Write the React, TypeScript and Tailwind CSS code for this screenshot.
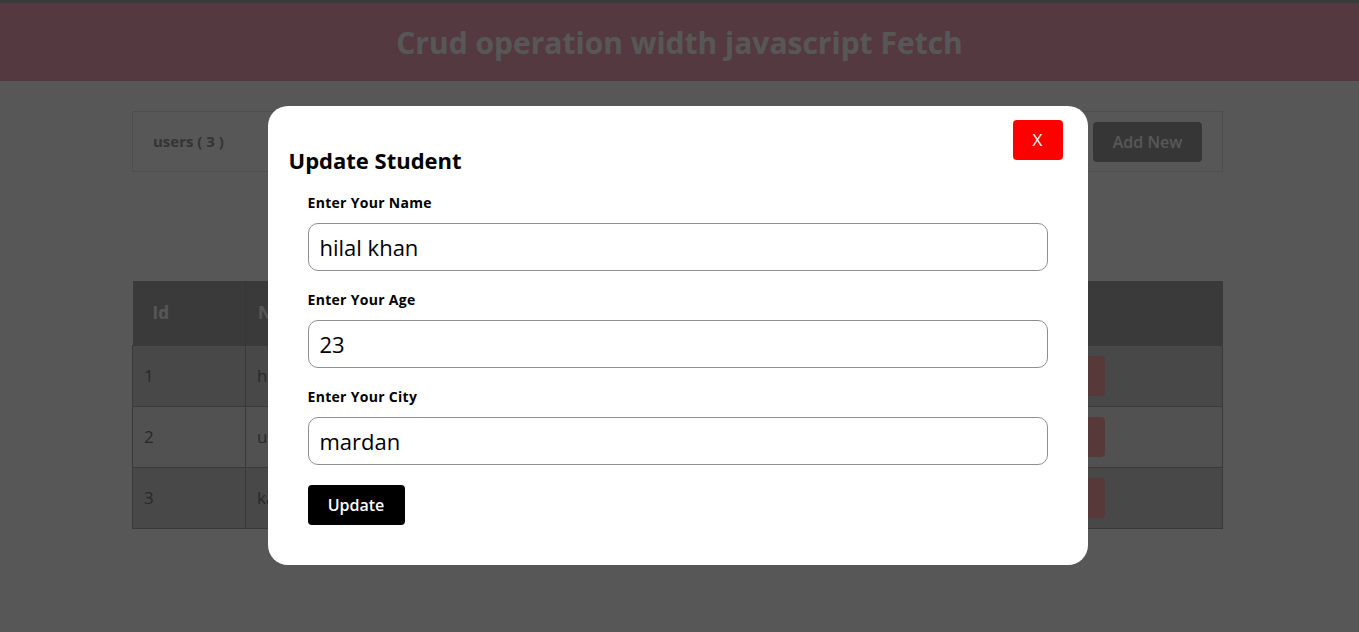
import { useState } from "react";

type Student = {
  id: number;
  name: string;
  age: number;
  city: string;
};

const students: Student[] = [
  { id: 1, name: "hilal khan", age: 23, city: "mardan" },
  { id: 2, name: "usman", age: 25, city: "peshawar" },
  { id: 3, name: "kamran", age: 22, city: "swabi" },
];

const font = "font-['Open_Sans','Liberation_Sans',sans-serif]";

const Field = ({
  label,
  value,
  onChange,
}: {
  label: string;
  value: string;
  onChange: (v: string) => void;
}) => (
  <div className="mt-[20px] first:mt-0">
    <label className="mb-[12px] block text-[14px] font-bold leading-[17px] tracking-[0.3px] text-black">
      {label}
    </label>
    <input
      className="block h-[48px] w-full rounded-[10px] border border-[#8f8f8f] bg-white px-[11px] text-[22px] text-black outline-none"
      value={value}
      onChange={(e) => onChange(e.target.value)}
    />
  </div>
);

const App = () => {
  const [name, setName] = useState("hilal khan");
  const [age, setAge] = useState("23");
  const [city, setCity] = useState("mardan");

  return (
    <div className={`relative min-h-[632px] bg-white ${font}`}>
      <div className="h-[3px] bg-[#a8abae]" />
      <header className="flex h-[78px] items-center justify-center bg-[#f9a6bf]">
        <h1 className="text-[30px] font-bold text-white">
          Crud operation width javascript Fetch
        </h1>
      </header>

      <main className="ml-[132px] w-[1091px] pt-[30px]">
        <div className="flex h-[61px] items-center justify-between border border-[#e3e3e3] pl-[20px] pr-[20px]">
          <span className="text-[15px] font-bold text-[#9a9a9a]">users ( 3 )</span>
          <button className="h-[40px] w-[109px] rounded-[4px] bg-[#9e9e9e] text-[16px] font-semibold text-white">
            Add New
          </button>
        </div>

        <table className="mt-[109px] w-full table-fixed border-collapse text-[17px]">
          <colgroup>
            <col className="w-[113px]" />
            <col className="w-[250px]" />
            <col className="w-[200px]" />
            <col className="w-[250px]" />
            <col />
          </colgroup>
          <thead>
            <tr className="h-[64px] bg-[#ababab] text-left text-white">
              <th className="border-r border-[#a0a0a0] px-[20px] font-bold">Id</th>
              <th className="px-[12px] font-bold">Name</th>
              <th className="px-[12px] font-bold">Age</th>
              <th className="px-[12px] font-bold">City</th>
              <th className="px-[12px] font-bold">Action</th>
            </tr>
          </thead>
          <tbody>
            {students.map((s, i) => (
              <tr
                key={s.id}
                className={`h-[61px] ${i % 2 === 1 ? "bg-[#ededed]" : "bg-[#d3d3d3]"}`}
              >
                <td className="border border-[#a9a9a9] px-[11px] text-[#777]">{s.id}</td>
                <td className="border border-[#a9a9a9] px-[11px] text-[#777]">{s.name}</td>
                <td className="border border-[#a9a9a9] px-[11px] text-[#777]">{s.age}</td>
                <td className="border border-[#a9a9a9] px-[11px] text-[#777]">{s.city}</td>
                <td className="border border-[#a9a9a9] px-[12px]">
                  <div className="flex gap-[10px]">
                    <button className="h-[40px] w-[40px] rounded-[4px] bg-[#a8c8ff] text-white">
                      Edit
                    </button>
                    <button className="h-[40px] w-[97px] rounded-[4px] bg-[#ffa6ab] text-white">
                      Delete
                    </button>
                  </div>
                </td>
              </tr>
            ))}
          </tbody>
        </table>
      </main>

      <div className="fixed inset-0 flex justify-center bg-black/[0.66] pr-[4px]">
        <div className="relative mt-[106px] h-[459px] w-[820px] rounded-[20px] bg-white pt-[40px]">
          <button className="absolute right-[25px] top-[14px] h-[40px] w-[50px] rounded-[4px] bg-[#ff0000] text-[17px] text-white">
            X
          </button>
          <h2 className="px-[21px] text-[22px] font-bold leading-[28px] text-black">
            Update Student
          </h2>
          <form
            className="mt-[20px] px-[40px]"
            onSubmit={(e) => e.preventDefault()}
          >
            <Field label="Enter Your Name" value={name} onChange={setName} />
            <Field label="Enter Your Age" value={age} onChange={setAge} />
            <Field label="Enter Your City" value={city} onChange={setCity} />
            <button
              type="submit"
              className="mt-[20px] h-[40px] w-[97px] rounded-[4px] bg-black text-[16px] font-semibold text-white"
            >
              Update
            </button>
          </form>
        </div>
      </div>
    </div>
  );
};

export default App;
